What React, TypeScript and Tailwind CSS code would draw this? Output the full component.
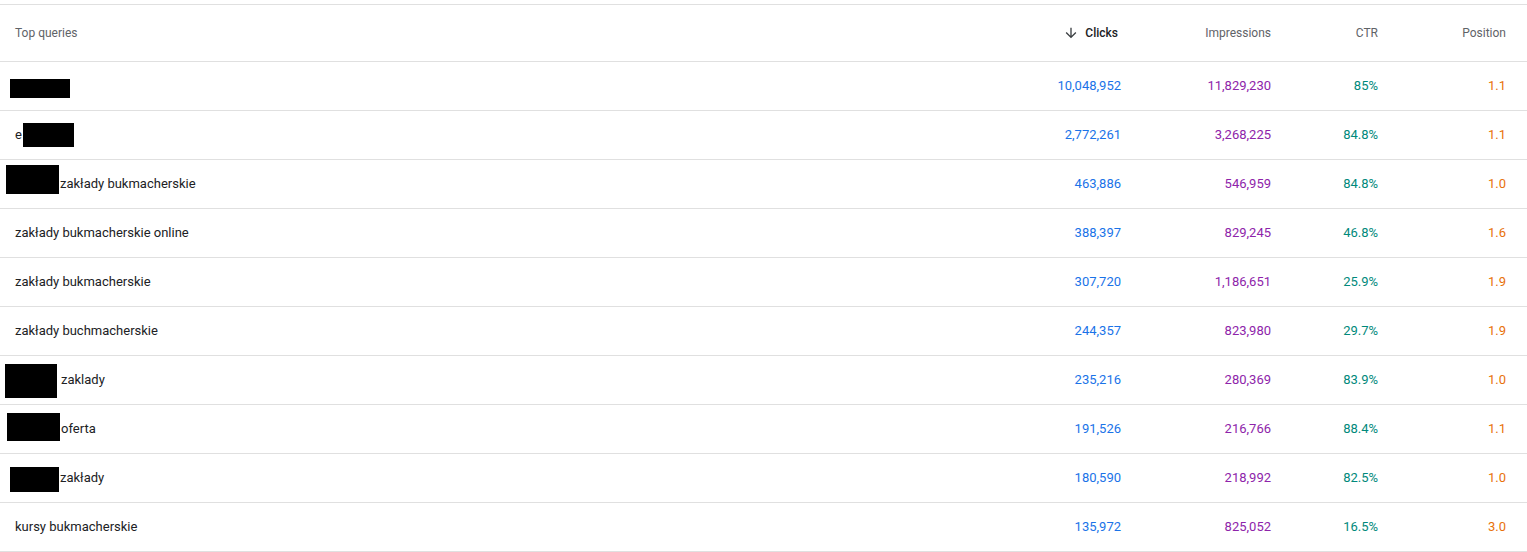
import React from 'react';

type Row = {
  prefix?: string;
  box?: string;
  text: string;
  textClass?: string;
  clicks: string;
  impressions: string;
  ctr: string;
  position: string;
};

const rows: Row[] = [
  { box: 'ml-[10px] mt-[17px] h-[19px] w-[60px]', text: '', clicks: '10,048,952', impressions: '11,829,230', ctr: '85%', position: '1.1' },
  { prefix: 'e', box: 'ml-[1px] mt-[12px] h-[24px] w-[51px]', text: '', clicks: '2,772,261', impressions: '3,268,225', ctr: '84.8%', position: '1.1' },
  { box: 'ml-[6px] mt-[5px] h-[29px] w-[53px]', text: 'zakłady bukmacherskie', textClass: 'ml-[1px]', clicks: '463,886', impressions: '546,959', ctr: '84.8%', position: '1.0' },
  { text: 'zakłady bukmacherskie online', clicks: '388,397', impressions: '829,245', ctr: '46.8%', position: '1.6' },
  { text: 'zakłady bukmacherskie', clicks: '307,720', impressions: '1,186,651', ctr: '25.9%', position: '1.9' },
  { text: 'zakłady buchmacherskie', clicks: '244,357', impressions: '823,980', ctr: '29.7%', position: '1.9' },
  { box: 'ml-[5px] mt-[8px] h-[34px] w-[52px]', text: 'zaklady', textClass: 'ml-[4px]', clicks: '235,216', impressions: '280,369', ctr: '83.9%', position: '1.0' },
  { box: 'ml-[7px] mt-[8px] h-[28px] w-[53px]', text: 'oferta', textClass: 'ml-[1px]', clicks: '191,526', impressions: '216,766', ctr: '88.4%', position: '1.1' },
  { box: 'ml-[10px] mt-[13px] h-[25px] w-[49px]', text: 'zakłady', textClass: 'ml-[1px]', clicks: '180,590', impressions: '218,992', ctr: '82.5%', position: '1.0' },
  { text: 'kursy bukmacherskie', clicks: '135,972', impressions: '825,052', ctr: '16.5%', position: '3.0' },
];

const ArrowDown = () => (
  <svg viewBox="0 0 24 24" className="h-[16px] w-[16px] fill-[#3c4043]">
    <path d="M20 12l-1.41-1.41L13 16.17V4h-2v12.17l-5.58-5.59L4 12l8 8 8-8z" />
  </svg>
);

const gridCols = 'grid grid-cols-[1fr_150px_150px_107px_128px] pr-[21px]';

export default function App() {
  return (
    <div className="min-h-[552px] bg-white pt-[4px] font-[Roboto,Arial,sans-serif]">
      {/* Header */}
      <div className={`${gridCols} h-[58px] items-center border-y border-[#e0e0e0] text-[12px] text-[#5f6368]`}>
        <div className="pl-[15px]">Top queries</div>
        <div className="flex items-center justify-end pr-[3px] font-medium text-[#202124]">
          <ArrowDown />
          <span className="ml-[6px]">Clicks</span>
        </div>
        <div className="text-right">Impressions</div>
        <div className="text-right">CTR</div>
        <div className="text-right">Position</div>
      </div>

      {/* Rows */}
      {rows.map((row, i) => (
        <div key={i} className={`${gridCols} h-[49px] items-center border-b border-[#e0e0e0] text-[13px]`}>
          <div className={`flex h-full items-center text-[#202124] ${row.box && !row.prefix ? '' : 'pl-[15px]'}`}>
            {row.prefix && <span>{row.prefix}</span>}
            {row.box && <span className={`self-start bg-black ${row.box}`} />}
            {row.text && <span className={row.textClass}>{row.text}</span>}
          </div>
          <div className="text-right text-[#1a73e8]">{row.clicks}</div>
          <div className="text-right text-[#8e24aa]">{row.impressions}</div>
          <div className="text-right text-[#00897b]">{row.ctr}</div>
          <div className="text-right text-[#e8710a]">{row.position}</div>
        </div>
      ))}
    </div>
  );
}
